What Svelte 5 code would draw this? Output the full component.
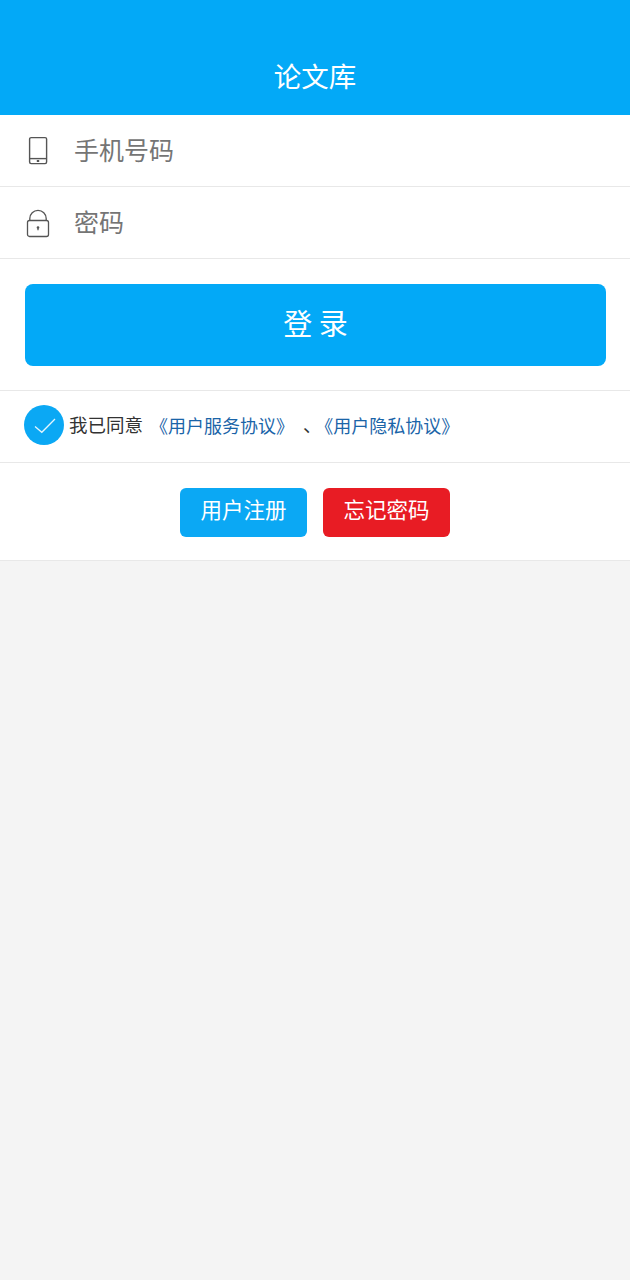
<script>
	let agreed = true;
</script>

<div class="page">
	<header class="title-bar">论文库</header>

	<section class="fields">
		<label class="field">
			<svg class="field-icon" width="24" height="30" viewBox="0 0 24 30" fill="none" stroke="#555" stroke-width="1.4">
				<rect x="3.600" y="1.600" width="17" height="26" rx="1.500" />
				<path d="M3.600 22.600h17" />
				<rect x="10.800" y="24" width="2.400" height="2" fill="#555" stroke="none" />
			</svg>
			<input type="text" placeholder="手机号码" />
		</label>
		<label class="field">
			<svg class="field-icon" width="24" height="30" viewBox="0 0 24 30" fill="none" stroke="#555" stroke-width="1.300">
				<rect x="1.500" y="12.500" width="21" height="16" rx="2" />
				<path d="M3.800 12.500v-2a8.200 8.200 0 0 1 16.400 0v2" />
				<path d="M12 19.500v2.800" stroke-width="1.300" />
				<circle cx="12" cy="19.500" r="1.300" fill="#555" stroke="none" />
			</svg>
			<input type="password" placeholder="密码" />
		</label>
	</section>

	<div class="login-wrap">
		<button class="login">登 录</button>
	</div>

	<div class="agree">
		<button class="check" class:on={agreed} on:click={() => (agreed = !agreed)} aria-label="同意">
			<svg width="40" height="40" viewBox="0 0 40 40" fill="none">
				<circle cx="20" cy="20" r="20" fill="#0ba8f4" />
				<path d="M11 21.500l6.800 5.800L31 14" stroke="#e4f5fe" stroke-width="1.300" />
			</svg>
		</button>
		<span class="agree-text">我已同意</span>
		<a href="#terms">《用户服务协议》</a>
		<span class="sep">、</span><a class="tight" href="#privacy">《用户隐私协议》</a>
	</div>

	<div class="actions">
		<button class="action blue">用户注册</button>
		<button class="action red">忘记密码</button>
	</div>
</div>

<style>
	:global(body) {
		margin: 0;
		background: #f4f4f4;
		font-family: "Noto Sans CJK SC", "Noto Sans", sans-serif;
	}

	.page {
		display: flex;
		flex-direction: column;
	}

	.title-bar {
		height: 115px;
		box-sizing: border-box;
		padding-top: 55px;
		background: #03a9f7;
		color: #fff;
		font-size: 27.500px;
		line-height: 40px;
		text-align: center;
	}

	.fields {
		background: #fff;
	}

	.field {
		display: flex;
		align-items: center;
		height: 72px;
		box-sizing: border-box;
		padding-left: 26px;
		border-bottom: 1px solid #e8e8e8;
	}

	.field-icon {
		flex: none;
	}

	input {
		flex: 1;
		margin: 0 0 3px 22px;
		border: 0;
		outline: none;
		background: none;
		font: inherit;
		font-size: 25px;
	}

	input::placeholder {
		color: #757575;
	}

	.login-wrap {
		padding: 25px 24px 24px 25px;
		background: #fff;
		border-bottom: 1px solid #e8e8e8;
	}

	.login {
		display: block;
		width: 100%;
		height: 82px;
		padding: 0 0 6px;
		border: 0;
		border-radius: 8px;
		background: #03a9f7;
		color: #fff;
		font: inherit;
		font-size: 29px;
	}

	.agree {
		display: flex;
		align-items: center;
		height: 72px;
		box-sizing: border-box;
		padding: 0 0 4px 24px;
		background: #fff;
		border-bottom: 1px solid #e8e8e8;
		font-size: 18.500px;
		line-height: 26px;
	}

	.check {
		display: flex;
		padding: 0;
		border: 0;
		background: none;
	}

	.agree-text {
		margin: 0 0 2px 5px;
		color: #333;
	}

	.agree a {
		margin: 0 0 0 7px;
		color: #1a64a8;
		font-size: 18px;
		text-decoration: none;
	}

	.sep {
		margin: 0 0 2px 9px;
		color: #333;
		font-feature-settings: "halt";
	}

	.agree a.tight {
		margin-left: 3px;
	}

	.actions {
		display: flex;
		justify-content: center;
		gap: 16px;
		padding: 25px 0 23px;
		background: #fff;
		border-bottom: 1px solid #e8e8e8;
	}

	.action {
		width: 127px;
		height: 49px;
		padding: 0 0 8px;
		border: 0;
		border-radius: 6px;
		color: #fff;
		font: inherit;
		font-size: 21.500px;
	}

	.blue {
		background: #0ba8f4;
	}

	.red {
		background: #e81c24;
	}
</style>
